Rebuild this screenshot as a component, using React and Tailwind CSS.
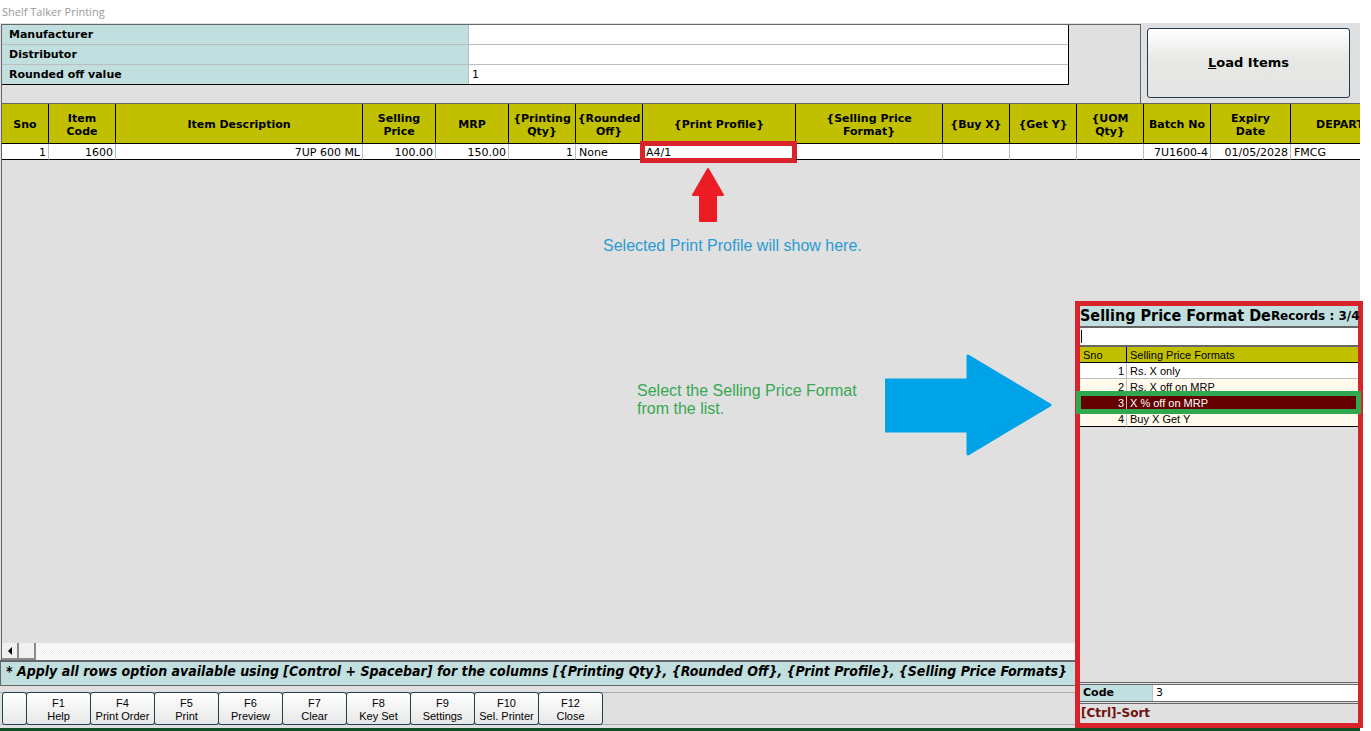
import { useState } from "react"

const columns = [
  { lines: ["Sno"], width: "w-[47px]", value: "1", align: "text-right" },
  { lines: ["Item", "Code"], width: "w-[67px]", value: "1600", align: "text-right" },
  { lines: ["Item Description"], width: "w-[247px]", value: "7UP 600 ML", align: "text-right" },
  { lines: ["Selling", "Price"], width: "w-[73px]", value: "100.00", align: "text-right" },
  { lines: ["MRP"], width: "w-[73px]", value: "150.00", align: "text-right" },
  { lines: ["{Printing", "Qty}"], width: "w-[67px]", value: "1", align: "text-right" },
  { lines: ["{Rounded", "Off}"], width: "w-[67px]", value: "None", align: "text-left" },
  { lines: ["{Print Profile}"], width: "w-[153px]", value: "A4/1", align: "text-left", marked: true },
  { lines: ["{Selling Price", "Format}"], width: "w-[147px]", value: "", align: "text-left" },
  { lines: ["{Buy X}"], width: "w-[67px]", value: "", align: "text-left" },
  { lines: ["{Get Y}"], width: "w-[67px]", value: "", align: "text-left" },
  { lines: ["{UOM", "Qty}"], width: "w-[67px]", value: "", align: "text-left" },
  { lines: ["Batch No"], width: "w-[67px]", value: "7U1600-4", align: "text-right" },
  { lines: ["Expiry", "Date"], width: "w-[80px]", value: "01/05/2028", align: "text-right" },
  { lines: ["DEPARTMENT"], width: "w-[134px]", value: "FMCG", align: "text-left" }
]

const functionKeys = [
  { key: "F1", label: "Help" },
  { key: "F4", label: "Print Order" },
  { key: "F5", label: "Print" },
  { key: "F6", label: "Preview" },
  { key: "F7", label: "Clear" },
  { key: "F8", label: "Key Set" },
  { key: "F9", label: "Settings" },
  { key: "F10", label: "Sel. Printer" },
  { key: "F12", label: "Close" }
]

const formats = ["Rs. X only", "Rs. X off on MRP", "X % off on MRP", "Buy X Get Y"]

function FilterRow({ id, label, initial = "", last }) {
  const [value, setValue] = useState(initial)

  return (
    <div className={`flex h-5 border-b ${last ? "border-black" : "border-[#bdbdbd]"}`}>
      <label htmlFor={id} className="w-[467px] shrink-0 border-r border-[#bdbdbd] bg-[#c0dfde] pt-px pl-[7px] font-bold leading-[18px]">
        {label}
      </label>
      <input
        id={id}
        value={value}
        onChange={(e) => setValue(e.target.value)}
        className="min-w-0 flex-1 bg-white px-[3px] pt-[2px] outline-none"
      />
    </div>
  )
}

function ItemsTable() {
  return (
    <table className="w-[1423px] table-fixed border-separate border-spacing-0 border-t border-[#666]">
      <colgroup>
        {columns.map((col) => (
          <col key={col.lines[0]} className={col.width} />
        ))}
      </colgroup>
      <thead>
        <tr className="h-10 bg-[#c0c000]">
          {columns.map((col) => (
            <th key={col.lines[0]} className="border-r border-b border-black px-0 pt-[2px] pb-0 leading-[13px] font-bold">
              {col.lines.map((line) => (
                <span key={line} className="block">{line}</span>
              ))}
            </th>
          ))}
        </tr>
      </thead>
      <tbody>
        <tr className="h-4 bg-white">
          {columns.map((col) => (
            <td key={col.lines[0]} className={`relative border-r border-b border-r-[#bdbdbd] border-b-black pt-[2px] pr-[2px] pb-0 pl-[3px] leading-[13px] ${col.align}`}>
              {col.value}
              {col.marked && <span className="absolute -top-[3px] -right-[2px] -bottom-1 -left-[3px] border-[5px] border-[#d9232b]" />}
            </td>
          ))}
        </tr>
      </tbody>
    </table>
  )
}

function FormatDialog() {
  const [selected, setSelected] = useState(2)
  const [search, setSearch] = useState("")

  return (
    <section
      aria-label="Selling Price Format"
      className="absolute top-[301px] right-2 bottom-[3px] flex w-[288px] flex-col border-[5px] border-[#d9232b] bg-[#e0e0e0]"
    >
      <div className="flex h-5 items-center justify-between bg-[#c0dfde] font-bold whitespace-nowrap">
        <h2 className="font-['DejaVu_Sans_Condensed','DejaVu_Sans',sans-serif] text-base leading-5">Selling Price Format De</h2>
        <span className="text-xs leading-5">Records : 3/4</span>
      </div>
      <div className="relative border-y-2 border-[#666]">
        <input
          aria-label="Search format"
          value={search}
          onChange={(e) => setSearch(e.target.value)}
          className="block h-[17px] w-full bg-white px-1 outline-none"
        />
        <span className="absolute top-[2px] left-px h-[13px] w-px bg-black" />
      </div>

      <table className="w-full table-fixed border-separate border-spacing-0 font-['Liberation_Sans',sans-serif] text-[11px]">
        <colgroup>
          <col className="w-[47px]" />
          <col />
        </colgroup>
        <thead>
          <tr className="h-4 bg-[#c0c000] text-left">
            <th className="border-r border-b border-black px-[3px] pt-[2px] pb-0 leading-[13px] font-normal">Sno</th>
            <th className="border-b border-black px-[3px] pt-[2px] pb-0 leading-[13px] font-normal">Selling Price Formats</th>
          </tr>
        </thead>
        <tbody>
          {formats.map((format, i) => {
            const active = i === selected
            const line = i === formats.length - 1 ? "border-b-black" : "border-b-[#bdbdbd]"
            return (
              <tr
                key={format}
                onClick={() => setSelected(i)}
                className={`h-4 ${active ? "bg-[#640000] text-white" : i === 0 ? "bg-white" : "bg-[#fffaeb]"}`}
              >
                <td className={`relative border-r border-b border-r-[#bdbdbd] px-[2px] pt-[2px] pb-0 text-right leading-[13px] ${line}`}>
                  {i + 1}
                  {active && (
                    <span className="absolute -top-1 -left-1 z-10 h-[23px] w-[285px] border-[5px] border-[#2fa84f]" />
                  )}
                </td>
                <td className={`border-b px-[3px] pt-[2px] pb-0 leading-[13px] ${line}`}>{format}</td>
              </tr>
            )
          })}
        </tbody>
      </table>

      <div className="flex-1" />

      <div className="h-[3px] border-y border-[#666]" />
      <div className="flex h-4">
        <label htmlFor="code" className="w-[73px] border-r border-[#bdbdbd] bg-[#c0dfde] pl-[3px] leading-4 font-bold">Code</label>
        <input id="code" defaultValue="3" className="min-w-0 flex-1 bg-white px-[3px] outline-none" />
      </div>
      <div className="h-[3px] border-y border-[#666]" />
      <div className="h-[19px] pl-px text-xs leading-[18px] font-bold text-[#701010]">[Ctrl]-Sort</div>
    </section>
  )
}

export default function App() {
  return (
    <div className="relative flex h-screen flex-col overflow-hidden bg-white font-['DejaVu_Sans',sans-serif] text-[11px] text-black">
      {/* Window title */}
      <header className="h-[23px] shrink-0 pl-[2px] font-['Open_Sans',sans-serif] leading-6 text-[#999]">
        Shelf Talker Printing
      </header>

      <main className="mr-[11px] flex min-h-0 flex-1 flex-col bg-[#e0e0e0] pt-px">
        <div className="ml-px flex min-h-0 flex-1 flex-col overflow-hidden border-l border-[#666]">
          {/* Filters */}
          <div className="flex h-[79px] shrink-0">
            <div className="flex-1 border-t border-r border-[#666] pr-[71px]">
              <div className="border-r border-black">
                <FilterRow id="manufacturer" label="Manufacturer" />
                <FilterRow id="distributor" label="Distributor" />
                <FilterRow id="rounded" label="Rounded off value" initial="1" last />
              </div>
            </div>
            <div className="w-[219px] pt-[4px] pr-[10px] pb-[5px] pl-[6px]">
              <button className="h-full w-full rounded-[3px] border border-[#1c3c5a] bg-linear-to-b from-white via-[#e8e8e6] via-45% to-[#e4e4e4] text-[13px] font-bold">
                <u>L</u>oad Items
              </button>
            </div>
          </div>

          <ItemsTable />

          <div className="flex-1" />

          {/* Horizontal scrollbar */}
          <div className="flex h-[17px] shrink-0 bg-[repeating-conic-gradient(#ffffff_0_25%,#eeeeee_0_50%)] bg-[length:2px_2px]">
            <button aria-label="Scroll left" className="flex w-[17px] items-center justify-center border-r-2 border-b-2 border-[#8a8a8a] bg-[#f0f0f0]">
              <svg viewBox="0 0 4 8" className="h-2 w-1">
                <path d="M4 0v8L0 4z" />
              </svg>
            </button>
            <div className="w-[17px] border-r-2 border-b-2 border-[#8a8a8a] bg-[#f0f0f0]" />
          </div>
        </div>

        <p className="h-[26px] shrink-0 overflow-hidden border-t-2 border-b border-l border-[#666] bg-[#c0dfde] pl-[5px] font-['DejaVu_Sans_Condensed','DejaVu_Sans',sans-serif] text-sm leading-[18px] font-bold whitespace-nowrap italic">
          * Apply all rows option available using [Control + Spacebar] for the columns [&#123;Printing Qty&#125;, &#123;Rounded Off&#125;, &#123;Print Profile&#125;, &#123;Selling Price Formats&#125;
        </p>

        {/* Function keys */}
        <nav className="mt-[6px] mb-[3px] flex h-[33px] shrink-0 border-y border-[#aaa] pl-[2px] font-['Liberation_Sans',sans-serif]">
          <div className="-my-px flex">
            <button aria-label="Menu" className="w-[25px] rounded-[3px] border border-[#1c4250] bg-linear-to-b from-white to-[#e8e8e8]" />
            {functionKeys.map((fn) => (
              <button
                key={fn.key}
                className="-ml-px w-[65px] rounded-[3px] border border-[#1c4250] bg-linear-to-b from-white to-[#e8e8e8] pt-[2px] leading-[13px]"
              >
                {fn.key}
                <br />
                {fn.label}
              </button>
            ))}
          </div>
        </nav>
        <div className="h-[3px] shrink-0 bg-[#0f4d27]" />
      </main>

      {/* Callouts drawn over the screen */}
      <svg viewBox="0 0 32 55" className="absolute top-[167px] left-[692px] h-[55px] w-8 fill-[#ed1c24] stroke-[#ed1c24]">
        <path d="M16 2L31 28H24V54H8V28H1z" strokeWidth="2" strokeLinejoin="round" />
      </svg>
      <p className="absolute top-[237px] left-[603px] font-['Liberation_Sans',sans-serif] text-base leading-[18px] whitespace-nowrap text-[#2a9bd2]">
        Selected Print Profile will show here.
      </p>
      <p className="absolute top-[382px] left-[637px] font-['Liberation_Sans',sans-serif] text-base leading-[18px] whitespace-nowrap text-[#36a853]">
        Select the Selling Price Format
        <br />
        from the list.
      </p>
      <svg viewBox="0 0 167 102" className="absolute top-[354px] left-[885px] h-[102px] w-[167px] fill-[#00a2e8] stroke-[#00a2e8]">
        <path d="M1 26H83V2L165 51L83 100V77H1z" strokeWidth="3" strokeLinejoin="round" />
      </svg>

      <FormatDialog />
    </div>
  )
}
